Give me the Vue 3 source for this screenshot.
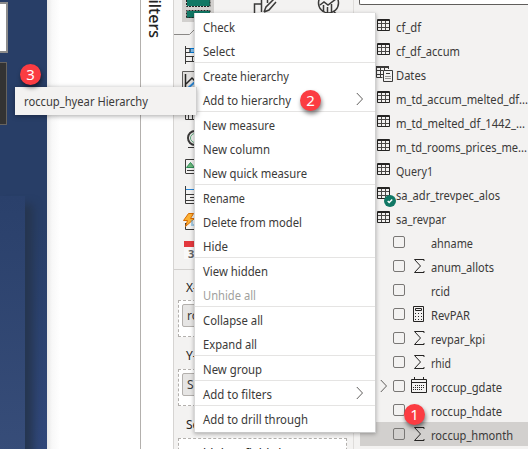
<script setup>
const groups = [
  [{ t: 'Check', w: 32 }, { t: 'Select', w: 32 }],
  [{ t: 'Create hierarchy', w: 86 }, { t: 'Add to hierarchy', w: 88, more: true }],
  [{ t: 'New measure', w: 72 }, { t: 'New column', w: 67 }, { t: 'New quick measure', w: 104 }],
  [{ t: 'Rename', w: 42 }, { t: 'Delete from model', w: 99 }, { t: 'Hide', w: 25 }],
  [{ t: 'View hidden', w: 65 }, { t: 'Unhide all', w: 53, off: true }],
  [{ t: 'Collapse all', w: 60 }, { t: 'Expand all', w: 54 }],
  [{ t: 'New group', w: 59 }],
  [{ t: 'Add to filters', w: 69, more: true }],
  [{ t: 'Add to drill through', w: 105 }]
]
const tables = [
  { t: 'cf_df', w: 25 },
  { t: 'cf_df_accum', w: 64 },
  { t: 'Dates', w: 30, icon: 'calc' },
  { t: 'm_td_accum_melted_df...', w: 132 },
  { t: 'm_td_melted_df_1442_...', w: 129 },
  { t: 'm_td_rooms_prices_me...', w: 131 },
  { t: 'Query1', w: 37 },
  { t: 'sa_adr_trevpec_alos', w: 104, icon: 'check' },
  { t: 'sa_revpar', w: 50 }
]
const fields = [
  { t: 'ahname', w: 42 },
  { t: 'anum_allots', w: 63, icon: 'sum' },
  { t: 'rcid', w: 19 },
  { t: 'RevPAR', w: 39, icon: 'measure' },
  { t: 'revpar_kpi', w: 54, icon: 'sum' },
  { t: 'rhid', w: 20, icon: 'sum' },
  { t: 'roccup_gdate', w: 71, icon: 'date', more: true },
  { t: 'roccup_hdate', w: 71 },
  { t: 'roccup_hmonth', w: 82, icon: 'sum', active: true }
]
</script>

<template>
  <div class="screen">
    <section class="canvas">
      <div class="tile light"></div>
      <div class="tile dark"></div>
      <div class="panel"></div>
    </section>
    <section class="page"></section>
    <aside class="filters"><span>Filters</span></aside>

    <aside class="viz">
      <svg class="gallery" width="180" height="269" viewBox="174 0 180 269" fill="none">
        <path d="M182 0h32v22h-32z" fill="#d2d0ce" />
        <path d="M187 0h23v6h-23zM187 11h23v7h-23z" fill="#117865" />
        <path d="M186.500 0v6.500h23.500v-6.500M186.500 17.500v-7h23.500v7z" stroke="#252423" stroke-dasharray="2 1" />
        <path d="M174 34.500h15.500l6-6" stroke="#8a8886" />
        <path d="M254.500 13v-9h7v8M261.500 4v-4M267.500 0v3M264 12l2-5 8-8M264 12l5-2 7-8" stroke="#3b3a39" stroke-width="1.500" />
        <circle cx="328.500" cy="3" r="10" stroke="#3b3a39" stroke-width="1.500" />
        <path d="M320 5l4-3 4 3 8-6M323.500 5v6M327.500 7v6M331.500 4v8M334 12l4 3" stroke="#3b3a39" stroke-width="1.500" />
        <path d="M190 48.500h8v4h-8z" fill="#83beec" stroke="#0078d4" />
        <path d="M185.500 46v18M185 48.500h5v4h-5M185 56.500h12M185 61.500h12M192.500 57v4" stroke="#3b3a39" />
        <path d="M182.500 71.500h20v22h-20z" fill="#e1dfdd" stroke="#605e5c" />
        <path d="M185.500 74v16M186 84l6-6 5 5" stroke="#252423" stroke-width="1.500" />
        <path d="M187 89l9-8" stroke="#2b88d8" stroke-width="2" />
        <path d="M185.500 112v7.500h10M188.500 114v5M192.500 114v5M186 114.500h8" stroke="#3b3a39" />
        <circle cx="195" cy="138" r="7" stroke="#3b3a39" stroke-width="2" />
        <circle cx="195" cy="138" r="4.500" stroke="#5ba879" />
        <path d="M188 147.500h8M185.500 173v-13.500h12M185.500 173.500h12M187 170.500h9" stroke="#3b3a39" />
        <path d="M190.500 162.500l4 5h-8z" fill="#6bb67b" stroke="#2e8b57" />
        <path d="M185.500 186v17.500h12M186 194.500h9M186 200.500h10M190 197.500h6" stroke="#3b3a39" />
        <path d="M186 189.500h12" stroke="#2b88d8" />
        <path d="M185.500 223v6.500h12" stroke="#3b3a39" />
        <path d="M188.500 213.500h5l-3 5h4l-9 8 2-6h-4z" fill="#fbb034" stroke="#d86b00" />
        <path d="M192 220v6M193 225h5" stroke="#54a5d8" />
        <path d="M184 241h14v6h-14z" fill="#e3383e" />
        <path d="M184 247h14v12h-14z" fill="#f8f8f8" />
        <text x="188" y="258" font-size="11" font-weight="bold" fill="#666">31</text>
      </svg>
      <div class="well-label">X-axis</div>
      <div class="well"><div class="chip">roccup</div></div>
      <div class="well-label">Y-axis</div>
      <div class="well"><div class="chip">Sum</div></div>
      <div class="well-label">Secondary</div>
      <div class="well empty">Add data fields here</div>
    </aside>

    <aside class="data">
      <div class="search"></div>
      <div class="list">
        <div v-for="r in tables" :key="r.t" class="row">
          <svg class="table-icon" width="18" height="18" viewBox="0 0 18 18" fill="none">
            <g v-if="r.icon === 'calc'" stroke="#3b3a39">
              <path d="M.5 1.500h12M.5 1v11.500h6M0 2.500h13M0 5.500h7M0 9.500h7M4.500 3v9M8.500 3v2M12.500 1v3" />
              <path d="M8 5.500h8.500v11h-9v-11zM10 8.500h4" />
              <path d="M9.500 11.500h6M9.500 13.500h6" stroke-dasharray="1 1" />
            </g>
            <g v-else>
              <path d="M5.500 4v9M9.500 4v9M2 6.500h11M2 10.500h11" stroke="#4a4846" />
              <path d="M1.500 2.500h12v11h-12zM1 3.500h13" stroke="#252423" />
            </g>
            <g v-if="r.icon === 'check'">
              <circle cx="14" cy="16" r="6" fill="#117865" />
              <path d="M11.700 16l1.500 1.500 3-3" stroke="#fff" stroke-width="1.500" />
            </g>
          </svg>
          <svg class="label" :width="r.w + 4" height="24"><text y="17.500" :textLength="r.w" lengthAdjust="spacingAndGlyphs">{{ r.t }}</text></svg>
        </div>
        <div v-for="r in fields" :key="r.t" class="row field" :class="{ active: r.active }">
          <svg class="expand" width="8" height="14" viewBox="0 0 8 14" fill="none"><path v-if="r.more" d="M.8 1l5.700 6-5.700 6" stroke="#605e5c" /></svg>
          <span class="box"></span>
          <svg class="kind" width="18" height="18" viewBox="0 0 18 18" fill="none" stroke="#252423">
            <path v-if="r.icon === 'sum'" d="M13 4V2.500H3.500L9.500 9l-6 6.500H13V14" />
            <g v-if="r.icon === 'measure'">
              <path d="M2.500 1.500h10v15h-10zM4.500 3.500h6v2h-6z" />
              <path d="M4 8.500h7M4 11.500h7M4 14.500h7" stroke-dasharray="1 2" />
            </g>
            <g v-if="r.icon === 'date'">
              <path d="M.5 2.500h15v13H.5zM0 5.500h16M3.500 0v3M12.500 0v3" />
              <path d="M4 8.500h9M2 10.500h11M2 12.500h9" stroke-dasharray="1 1" />
            </g>
          </svg>
          <svg class="label" :width="r.w + 4" height="24"><text y="17.500" :textLength="r.w" lengthAdjust="spacingAndGlyphs">{{ r.t }}</text></svg>
        </div>
      </div>
    </aside>

    <nav class="menu">
      <div v-for="(g, i) in groups" :key="i" class="group">
        <div v-for="m in g" :key="m.t" class="item" :class="{ off: m.off }">
          <svg class="label" :width="m.w + 4" height="24"><text y="17.500" :textLength="m.w" lengthAdjust="spacingAndGlyphs">{{ m.t }}</text></svg>
          <svg v-if="m.more" width="8" height="14" viewBox="0 0 8 14" fill="none"><path d="M.8 1l5.700 6-5.700 6" stroke="#605e5c" /></svg>
        </div>
      </div>
    </nav>

    <div class="submenu">
      <svg class="label" width="130" height="24"><text y="17" textLength="124" lengthAdjust="spacingAndGlyphs">roccup_hyear Hierarchy</text></svg>
    </div>

    <span class="badge one">1</span>
    <span class="badge two">2</span>
    <span class="badge three">3</span>
  </div>
</template>

<style>
body { margin: 0; overflow: hidden; }
</style>

<style scoped>
* { box-sizing: border-box; }
.screen {
  position: relative;
  display: grid;
  grid-template-columns: 47px 93px 33px 181px 174px;
  width: 528px;
  height: 449px;
  overflow: hidden;
  background: #fff;
  color: #3b3a39;
  font: 12px/24px "Noto Sans", "Open Sans", sans-serif;
}
.canvas {
  height: 449px;
  overflow: hidden;
  background: linear-gradient(180deg, #283e67 0%, #283e67 50%, #304779 100%);
}
.tile { width: 8px; border: 1px solid #8c8c8c; border-left: 0; }
.light { height: 51px; margin-top: 2px; background: #fff; border-width: 2px; }
.dark { width: 7px; height: 63px; margin-top: 9px; background: #333; border-color: #66635f; }
.panel {
  width: 25px;
  height: 280px;
  margin-top: 71px;
  background: linear-gradient(180deg, #2a406b, #384e7a);
  box-shadow: 8px 8px 8px #263650;
}
.page { background: linear-gradient(90deg, #e7e7e7, #f8f8f8 5px, #fff 13px); }
.filters { position: relative; border-left: 1px solid #b3b0ad; }
.filters span {
  position: absolute;
  right: 9px;
  bottom: 411px;
  writing-mode: vertical-rl;
  font-size: 16px;
  font-weight: 500;
  line-height: 18px;
  color: #252423;
}
.viz {
  height: 449px;
  overflow: hidden;
  background: #f3f2f1;
  border-left: 1px solid #d6d4d2;
  border-right: 1px solid #dedcda;
}
.gallery { display: block; }
.well-label {
  height: 31px;
  padding: 6px 0 0 12px;
  border-top: 1px solid #d2d0ce;
  color: #252423;
}
.well {
  height: 37px;
  margin: 0 6px 0 4px;
  padding: 3px;
  background: #fff;
  border: 1px dashed #b3b0ad;
}
.well + .well-label { height: 32px; padding-top: 7px; border: 0; }
.chip {
  height: 23px;
  padding-left: 4px;
  border: 1px solid #b3b0ad;
  border-radius: 2px;
  background: #e6e5e4;
  line-height: 21px;
}
.empty { padding: 3px 12px; color: #252423; }
.data { height: 449px; background: #f3f2f1; overflow: hidden; }
.search {
  height: 5px;
  margin-left: 5px;
  border: solid #605e5c;
  border-width: 0 0 1px 1px;
  border-radius: 0 0 0 2px;
  background: #fff;
}
.list { padding-top: 9px; }
.row { display: flex; align-items: center; height: 24px; margin-left: 6px; padding-left: 16px; }
.table-icon { flex: none; margin-right: 2px; overflow: visible; }
.label { flex: none; display: block; overflow: visible; fill: #3b3a39; }
.field { padding-left: 20px; }
.expand { flex: none; margin-right: 5px; }
.box { flex: none; width: 12px; height: 12px; border: 1px solid #797775; border-radius: 2px; }
.kind { flex: none; margin: 0 2px 0 6px; }
.active { background: #d2d0ce; }
.menu {
  position: absolute;
  left: 194px;
  top: 13px;
  width: 182px;
  height: 420px;
  padding-top: 1px;
  background: #fff;
  border-left: 1px solid #d8d8d8;
  border-right: 1px solid #d0d0d0;
  border-bottom: 1px solid #c8c8c8;
  box-shadow: 0 1px 4px rgba(0, 0, 0, .3);
}
.group + .group { border-top: 1px solid #e5e4e3; }
.item { display: flex; align-items: center; justify-content: space-between; height: 24px; padding: 0 11px 0 8px; }
.off .label { fill: #a19f9d; }
.submenu {
  position: absolute;
  left: 15px;
  top: 87px;
  width: 182px;
  height: 28px;
  padding: 2px 9px;
  background: #f3f2f1;
  border-right: 1px solid #d0d0d0;
  box-shadow: 0 1px 5px rgba(0, 0, 0, .35);
}
.badge {
  position: absolute;
  width: 21px;
  height: 21px;
  border-radius: 50%;
  background: #fb3c42;
  color: #fff;
  font: 15px/21px "Noto Sans", sans-serif;
  text-align: center;
  box-shadow: 1px 3px 4px rgba(0, 0, 0, .5);
}
.one { left: 404px; top: 404px; }
.two { left: 300px; top: 90px; }
.three { left: 20px; top: 64px; }
</style>
